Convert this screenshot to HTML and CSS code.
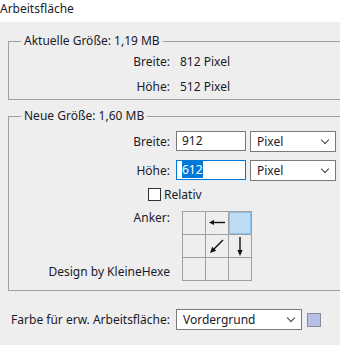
FILE: index.html
```html
<!DOCTYPE html>
<html lang="de">
<head>
    <meta charset="UTF-8">
    <title>Arbeitsfläche</title>
    <link rel="stylesheet" href="styles.css">
</head>
<body>
    <div class="titlebar">Arbeitsfläche</div>

    <fieldset class="group current">
        <legend>Aktuelle Größe: 1,19 MB</legend>
        <div class="row">
            <span class="label">Breite:</span>
            <span class="value">812 Pixel</span>
        </div>
        <div class="row">
            <span class="label">Höhe:</span>
            <span class="value">512 Pixel</span>
        </div>
    </fieldset>

    <fieldset class="group new">
        <legend>Neue Größe: 1,60 MB</legend>
        <div class="row field">
            <span class="label">Breite:</span>
            <div class="input">912</div>
            <div class="select unit">Pixel <span class="chevron"></span></div>
        </div>
        <div class="row field">
            <span class="label">Höhe:</span>
            <div class="input focused"><span class="selected">612</span></div>
            <div class="select unit">Pixel <span class="chevron"></span></div>
        </div>
        <div class="row check">
            <span class="label"></span>
            <label class="checkbox"><span class="box"></span>Relativ</label>
        </div>
        <div class="row anchor">
            <div class="label anchor-labels">
                <span>Anker:</span>
                <span>Design by KleineHexe</span>
            </div>
            <div class="anchor-grid">
                <div class="cell"></div>
                <div class="cell">
                    <svg viewBox="0 0 22 22" width="22" height="22"><path d="M19 10.5H6" stroke="#111" stroke-width="1.4"/><path d="M3 10.5l5-2.5v5z" fill="#111"/></svg>
                </div>
                <div class="cell active"></div>
                <div class="cell"></div>
                <div class="cell">
                    <svg viewBox="0 0 22 22" width="22" height="22"><path d="M17 5L7 15" stroke="#111" stroke-width="1.4"/><path d="M4 18l2.2-6.2 4 4z" fill="#111"/></svg>
                </div>
                <div class="cell">
                    <svg viewBox="0 0 22 22" width="22" height="22"><path d="M11 2v14" stroke="#111" stroke-width="1.4"/><path d="M11 21l-2.6-6h5.2z" fill="#111"/></svg>
                </div>
                <div class="cell"></div>
                <div class="cell"></div>
                <div class="cell"></div>
            </div>
        </div>
    </fieldset>

    <div class="row fill">
        <span class="label">Farbe für erw. Arbeitsfläche:</span>
        <div class="select wide">Vordergrund <span class="chevron"></span></div>
        <span class="swatch"></span>
    </div>
</body>
</html>
```

FILE: styles.css
```css
:root {
    --bg: #eeeeee;
    --text: #1a1a2a;
    --line: #a0a0a0;
    --field-border: #7a7a7a;
    --focus: #0078d7;
}

* {
    margin: 0;
    padding: 0;
    box-sizing: border-box;
}

body {
    font-family: 'Noto Sans', 'DejaVu Sans', sans-serif;
    font-size: 12px;
    color: var(--text);
    background: var(--bg);
    overflow: hidden;
}

.titlebar {
    background: white;
    height: 22px;
    line-height: 17px;
}

.group {
    margin: 11px 0 0 8px;
    width: 345px;
    border: none;
    border-top: 1px solid var(--line);
    border-left: 1px solid var(--line);
    border-bottom: 1px solid var(--line);
}

.group legend {
    margin-left: 12px;
    padding: 0 3px;
    line-height: 16px;
}

.new {
    margin-top: 8px;
    padding-top: 5px;
    padding-bottom: 9px;
}

.row {
    display: flex;
    align-items: center;
}

.label {
    width: 161px;
    text-align: right;
    flex-shrink: 0;
}

.current .row {
    height: 25px;
}

.value {
    margin-left: 10px;
}

.field {
    height: 24px;
    margin-bottom: 5px;
}

.input {
    margin-left: 6px;
    width: 70px;
    height: 20px;
    line-height: 18px;
    padding-left: 5px;
    background: white;
    border: 1px solid var(--field-border);
}

.input.focused {
    border-color: var(--focus);
}

.selected {
    background: var(--focus);
    color: white;
}

.select {
    position: relative;
    height: 21px;
    line-height: 19px;
    padding-left: 6px;
    background: white;
    border: 1px solid var(--field-border);
}

.unit {
    margin-left: 4px;
    width: 86px;
}

.chevron {
    position: absolute;
    right: 7px;
    top: 5px;
    width: 6px;
    height: 6px;
    border-right: 1px solid #444;
    border-bottom: 1px solid #444;
    transform: rotate(45deg);
}

.check {
    height: 14px;
    margin-top: 1px;
}

.checkbox {
    display: flex;
    align-items: center;
    margin-left: -22px;
}

.box {
    width: 13px;
    height: 13px;
    margin-right: 3px;
    background: white;
    border: 1px solid #333;
}

.anchor {
    margin-top: 10px;
    align-items: stretch;
}

.anchor-labels {
    display: flex;
    flex-direction: column;
    justify-content: space-between;
    align-items: flex-end;
    line-height: 14px;
    padding-bottom: 2px;
}

.anchor-grid {
    margin-left: 12px;
    display: grid;
    grid-template-columns: repeat(3, 22px);
    grid-template-rows: repeat(3, 22px);
    gap: 1px;
    padding: 1px;
    background: var(--line);
}

.cell {
    background: var(--bg);
}

.cell svg {
    display: block;
}

.cell.active {
    background: #bcdcf5;
    box-shadow: inset 0 0 0 1px #8cc2ef;
}

.fill {
    margin: 18px 0 0 9px;
}

.wide {
    margin-left: 6px;
    width: 126px;
}

.swatch {
    margin-left: 5px;
    width: 14px;
    height: 14px;
    background: #b9bfe8;
    border: 1px solid #8a8a9a;
}
```
